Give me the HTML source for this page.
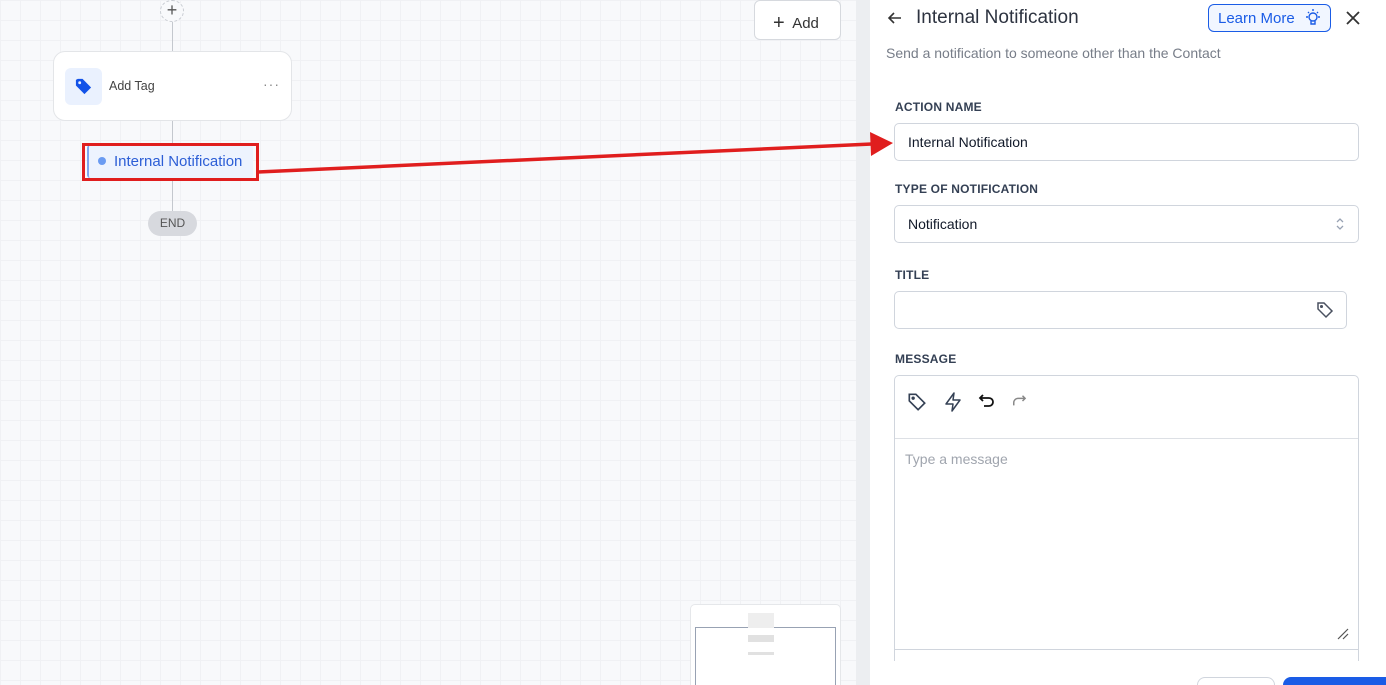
<!DOCTYPE html>
<html style="width:1386px;height:685px;overflow:hidden"><head><meta charset="utf-8"><style>
*{box-sizing:border-box;margin:0;padding:0}
body{width:1386px;height:685px;overflow:hidden;position:relative;font-family:"Liberation Sans",sans-serif;background:#fff}
.canvas{position:absolute;left:0;top:0;width:856px;height:685px;background-color:#f8f9fb;
background-image:linear-gradient(#f0f1f4 1px,transparent 1px),linear-gradient(90deg,#f0f1f4 1px,transparent 1px);background-size:20px 20px}
.strip{position:absolute;left:856px;top:0;width:14px;height:685px;background:#eceef1}
.panel{position:absolute;left:870px;top:0;width:516px;height:685px;background:#fff}
.abs{position:absolute}
.lbl{position:absolute;left:895px;font-size:12px;font-weight:bold;color:#344054;letter-spacing:.2px}
.inp{position:absolute;left:894px;border:1px solid #d0d5dd;border-radius:5px;background:#fff;font-size:14px;color:#101828;padding-left:13px;display:flex;align-items:center}
</style></head><body>
<div class="canvas"></div>
<div class="abs" style="left:172px;top:0;width:1px;height:52px;background:#c4c8ce"></div>
<div class="abs" style="left:160px;top:0;width:24px;height:22px;border:1px dashed #c8ccd2;border-radius:50%;background:#f8f9fb;font-size:18px;color:#555;text-align:center;line-height:18px">+</div>
<div class="abs" style="left:53px;top:51px;width:239px;height:70px;background:#fff;border:1px solid #e3e5e8;border-radius:12px"></div>
<div class="abs" style="left:65px;top:68px;width:37px;height:37px;background:#eaf1fe;border-radius:6px"></div>
<svg class="abs" style="left:74px;top:77px" width="19" height="19" viewBox="0 0 20 20"><path d="M2 3v6l9 9 7-7-9-9H4z" fill="#1252e8"/><circle cx="6" cy="6" r="1.5" fill="#eaf1fe"/></svg>
<div class="abs" style="left:109px;top:79px;font-size:12.5px;color:#444">Add Tag</div>
<div class="abs" style="left:263px;top:76px;font-size:14px;color:#888;letter-spacing:1px">···</div>
<div class="abs" style="left:172px;top:121px;width:1px;height:92px;background:#c4c8ce"></div>
<div class="abs" style="left:87px;top:145px;width:166px;height:33px;background:#edf3fe;border-left:2px solid #7ea5ee;border-radius:3px"></div>
<div class="abs" style="left:82px;top:143px;width:177px;height:38px;border:3px solid #e01e1e"></div>
<div class="abs" style="left:98px;top:157px;width:8px;height:8px;border-radius:50%;background:#6a9bf2"></div>
<div class="abs" style="left:114px;top:153px;font-size:15px;color:#2c5ed6">Internal Notification</div>
<div class="abs" style="left:148px;top:211px;width:49px;height:25px;background:#d7d9de;border-radius:13px;font-size:12px;color:#555;text-align:center;line-height:25px">END</div>
<div class="abs" style="left:754px;top:0;width:87px;height:40px;background:#fff;border:1px solid #d6d9de;border-radius:6px;font-size:15px;color:#333;padding:10px 0 0 18px"><span style="font-size:20px;position:relative;top:1px">+</span>&nbsp; Add</div>
<div class="abs" style="left:690px;top:604px;width:151px;height:81px;background:#fff;border:1px solid #e5e7ea;border-bottom:none;border-radius:5px 5px 0 0;overflow:hidden">
<div class="abs" style="left:4px;top:22px;width:141px;height:70px;border:1px solid #98a2b3"></div>
<div class="abs" style="left:57px;top:8px;width:26px;height:15px;background:#eee"></div>
<div class="abs" style="left:57px;top:30px;width:26px;height:7px;background:#e1e1e1"></div>
<div class="abs" style="left:57px;top:47px;width:26px;height:3px;background:#e1e1e1"></div>
</div>
<div class="strip"></div>
<div class="panel"></div>
<svg class="abs" style="left:886px;top:9px" width="18" height="18" viewBox="0 0 18 18"><path d="M15 9H3M8 4L3 9l5 5" stroke="#333" stroke-width="1.6" fill="none"/></svg>
<div class="abs" style="left:916px;top:7px;font-size:19px;color:#2d3340">Internal Notification</div>
<div class="abs" style="left:1208px;top:4px;width:123px;height:28px;border:1px solid #1a5ce6;border-radius:6px;background:#f1f6ff;color:#1a5ce6;font-size:15px;padding:5px 0 0 9px">Learn More</div>
<svg class="abs" style="left:1302px;top:7px" width="22" height="22" viewBox="0 0 22 22" fill="none" stroke="#1a5ce6" stroke-width="1.4"><circle cx="11" cy="10" r="4"/><path d="M9 14v3h4v-3M11 2v2M4 10h2M16 10h2M6 5l1 1M16 5l-1 1"/></svg>
<svg class="abs" style="left:1345px;top:10px" width="16" height="16" viewBox="0 0 16 16"><path d="M2 2l12 12M14 2L2 14" stroke="#333" stroke-width="1.8"/></svg>
<div class="abs" style="left:886px;top:45px;font-size:14px;color:#777d88">Send a notification to someone other than the Contact</div>
<div class="lbl" style="top:100px">ACTION NAME</div>
<div class="inp" style="top:123px;width:465px;height:38px">Internal Notification</div>
<div class="lbl" style="top:182px">TYPE OF NOTIFICATION</div>
<div class="inp" style="top:205px;width:465px;height:38px">Notification</div>
<svg class="abs" style="left:1335px;top:216px" width="10" height="16" viewBox="0 0 10 16" fill="none" stroke="#98a2b3" stroke-width="1.3"><path d="M2 6l3-3 3 3M2 10l3 3 3-3"/></svg>
<div class="lbl" style="top:268px">TITLE</div>
<div class="inp" style="top:291px;width:453px;height:38px"></div>
<svg class="abs" style="left:1315px;top:300px" width="20" height="20" viewBox="0 0 20 20" fill="none" stroke="#4a5160" stroke-width="1.5"><path d="M3 3h6l8 8-6 6-8-8z"/><circle cx="6.5" cy="6.5" r=".8" fill="#4a5160"/></svg>
<div class="lbl" style="top:352px">MESSAGE</div>
<div class="abs" style="left:894px;top:375px;width:465px;height:286px;border:1px solid #d0d5dd;border-bottom:none;border-radius:5px 5px 0 0"></div>
<div class="abs" style="left:895px;top:438px;width:463px;height:1px;background:#dde0e5"></div>
<div class="abs" style="left:895px;top:649px;width:463px;height:1px;background:#d0d5dd"></div>
<svg class="abs" style="left:906px;top:391px" width="22" height="22" viewBox="0 0 20 20" fill="none" stroke="#344054" stroke-width="1.5"><path d="M3 3h6l8 8-6 6-8-8z"/><circle cx="6.5" cy="6.5" r=".8" fill="#344054"/></svg>
<svg class="abs" style="left:943px;top:391px" width="20" height="22" viewBox="0 0 20 22" fill="none" stroke="#344054" stroke-width="1.5" stroke-linejoin="round"><path d="M11 2L3 13h7l-1 7 8-11h-7z"/></svg>
<svg class="abs" style="left:978px;top:393px" width="18" height="16" viewBox="0 0 18 16" fill="none" stroke="#111" stroke-width="1.8"><path d="M5 2L2 5l3 3M2 5h9a4 4 0 010 8H6"/></svg>
<svg class="abs" style="left:1011px;top:394px" width="16" height="14" viewBox="0 0 18 16" fill="none" stroke="#888" stroke-width="1.7"><path d="M13 2l3 3-3 3M16 5H8a5 5 0 00-5 5v3"/></svg>
<div class="abs" style="left:905px;top:451px;font-size:14px;color:#a0a5ae">Type a message</div>
<svg class="abs" style="left:1336px;top:627px" width="14" height="14" viewBox="0 0 14 14" stroke="#555" stroke-width="1.2"><path d="M2 12L12 2M7 12l5-5"/></svg>
<div class="abs" style="left:1197px;top:677px;width:78px;height:8px;border:1px solid #d0d5dd;border-bottom:none;border-radius:8px 8px 0 0;background:#fff"></div>
<div class="abs" style="left:1283px;top:677px;width:103px;height:8px;background:#1a5ce6;border-radius:8px 0 0 0"></div>
<svg class="abs" style="left:0;top:0" width="1386" height="685"><line x1="258" y1="172" x2="872" y2="144" stroke="#e01e1e" stroke-width="3.5"/><polygon points="893,143 870,132 871,156" fill="#e01e1e"/></svg>
</body></html>
